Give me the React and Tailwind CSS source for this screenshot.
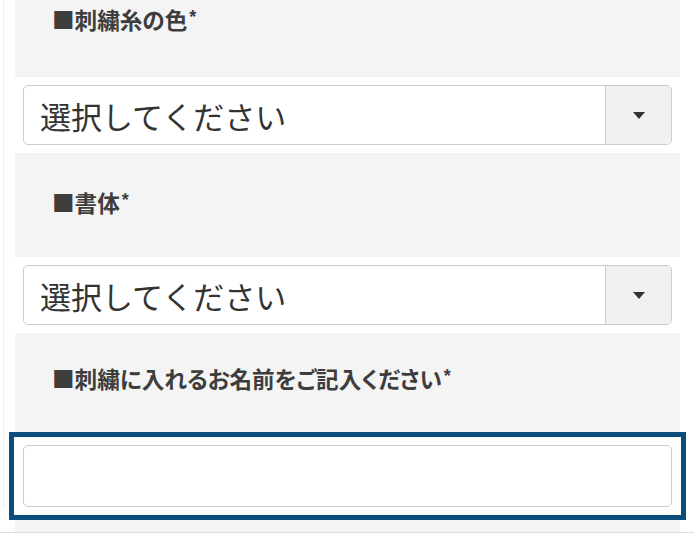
import React from "react";

const jp = "font-['Hiragino_Kaku_Gothic_ProN','Noto_Sans_CJK_JP',sans-serif]";

function Label({ text, className = "" }) {
  return (
    <div className={`flex items-center bg-[#f4f4f4] pl-[37px] ${className}`}>
      <p className={`${jp} text-[22.6px] font-bold leading-none text-[#3d3d3d] [font-feature-settings:'palt']`}>
        ■{text}
        <sup className="relative -top-[6px] ml-[2px] font-['Liberation_Sans',sans-serif] text-[18px] font-bold">*</sup>
      </p>
    </div>
  );
}

function SelectBox() {
  return (
    <div className="px-2 py-2">
      <div className="flex h-[60px] overflow-hidden rounded-[5px] border border-[#cccccc] bg-white">
        <div className={`${jp} flex flex-1 items-center pl-[16px] text-[31px] leading-none text-[#333333]`}>
          選択してください
        </div>
        <div className="flex w-[66px] items-center justify-center border-l border-[#cccccc] bg-[#f1f1f1]">
          <svg width="12" height="7" viewBox="0 0 12 7">
            <path d="M0 0 H12 L6 7 Z" fill="#333333" />
          </svg>
        </div>
      </div>
    </div>
  );
}

export default function App() {
  return (
    <div className="h-[535px] overflow-hidden bg-white pl-[3px]">
      <div className="h-full border-l border-[#ededed]">
        <div className="ml-[11px] w-[665px]">
          <Label text="刺繍糸の色" className="-mt-[27px] h-[104px] pb-[9px]" />
          <SelectBox />
          <Label text="書体" className="h-[104px] pb-[4px]" />
          <SelectBox />
          <Label text="刺繍に入れるお名前をご記入ください" className="h-[99px] pb-[6px]" />
          <div className="-mx-[6px] border-[5px] border-[#0b4e7d] bg-white px-[9px] py-2">
            <div className="h-[62px] rounded-[5px] border border-[#cccccc] bg-white" />
          </div>
          <div className="h-[12px] bg-[#f4f4f4]" />
        </div>
        <div className="-ml-[4px] border-t border-[#dddddd]" />
      </div>
    </div>
  );
}
